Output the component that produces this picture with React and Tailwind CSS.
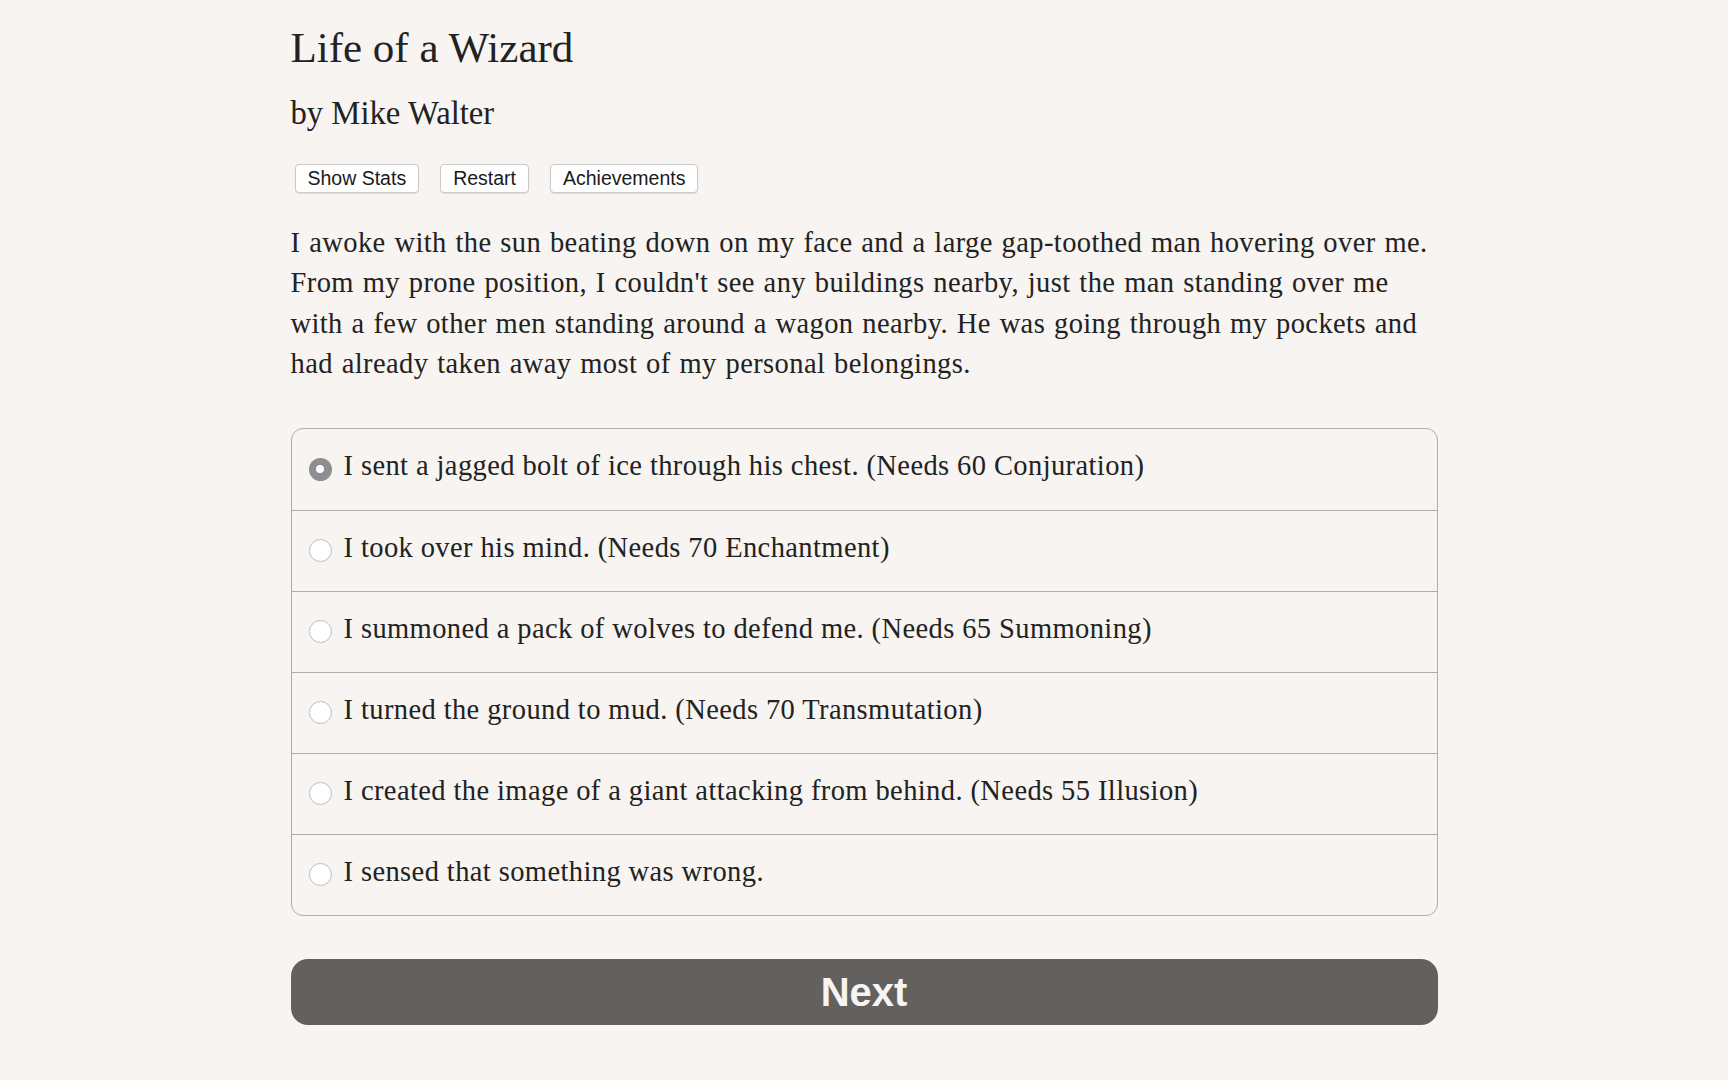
import { useState } from "react";

const options = [
  "I sent a jagged bolt of ice through his chest. (Needs 60 Conjuration)",
  "I took over his mind. (Needs 70 Enchantment)",
  "I summoned a pack of wolves to defend me. (Needs 65 Summoning)",
  "I turned the ground to mud. (Needs 70 Transmutation)",
  "I created the image of a giant attacking from behind. (Needs 55 Illusion)",
  "I sensed that something was wrong.",
];

const serif = { fontFamily: '"Liberation Serif", "Times New Roman", serif' };
const sans = { fontFamily: '"Liberation Sans", Arial, sans-serif' };

function Radio({ checked }) {
  if (checked) {
    return (
      <span className="flex h-[23px] w-[23px] shrink-0 items-center justify-center rounded-full bg-[#8e8d92]">
        <span className="h-[8px] w-[8px] rounded-full bg-white" />
      </span>
    );
  }
  return <span className="h-[23px] w-[23px] shrink-0 rounded-full border border-[#bdbdbd] bg-white" />;
}

export default function App() {
  const [choice, setChoice] = useState(0);

  return (
    <div className="min-h-screen bg-[#f7f4f1] text-[#222]" style={serif}>
      <div className="mx-auto w-[1147px] pt-[22px]">
        <h1 className="text-[43px] leading-[1.2] font-normal">Life of a Wizard</h1>
        <h2 className="mt-[20px] text-[32.7px] leading-[38.4px] font-normal">by Mike Walter</h2>

        <div className="mt-[32px] flex gap-[21px] pl-[4px]" style={sans}>
          {["Show Stats", "Restart", "Achievements"].map((label) => (
            <button
              key={label}
              className="h-[29px] rounded-[4px] border border-[#c9c9c9] bg-white px-[12px] text-[19.5px] leading-none text-[#1a1a1a] shadow-[0_1px_1px_rgba(0,0,0,0.08)]"
            >
              {label}
            </button>
          ))}
        </div>

        <p className="mt-[30px] text-[28.5px] leading-[40.4px] tracking-[0.4px] [word-spacing:1.3px]">
          I awoke with the sun beating down on my face and a large gap-toothed man hovering over me.
          From my prone position, I couldn't see any buildings nearby, just the man standing over me
          with a few other men standing around a wagon nearby. He was going through my pockets and
          had already taken away most of my personal belongings.
        </p>

        <div className="mt-[43px] overflow-hidden rounded-[12px] border border-[#acacac]">
          {options.map((text, i) => (
            <label
              key={i}
              onClick={() => setChoice(i)}
              className={`flex h-[81px] cursor-pointer items-center gap-[12px] pl-[17px] ${i > 0 ? "border-t border-[#acacac]" : ""}`}
            >
              <Radio checked={choice === i} />
              <span className="pb-[5px] text-[28.5px] leading-[40.4px] tracking-[0.4px]">{text}</span>
            </label>
          ))}
        </div>

        <button
          className="mt-[43px] flex h-[66px] w-full items-center justify-center rounded-[17px] bg-[#62615f] text-[40px] font-bold text-[#f7f4f1]"
          style={sans}
        >
          Next
        </button>
      </div>
    </div>
  );
}
